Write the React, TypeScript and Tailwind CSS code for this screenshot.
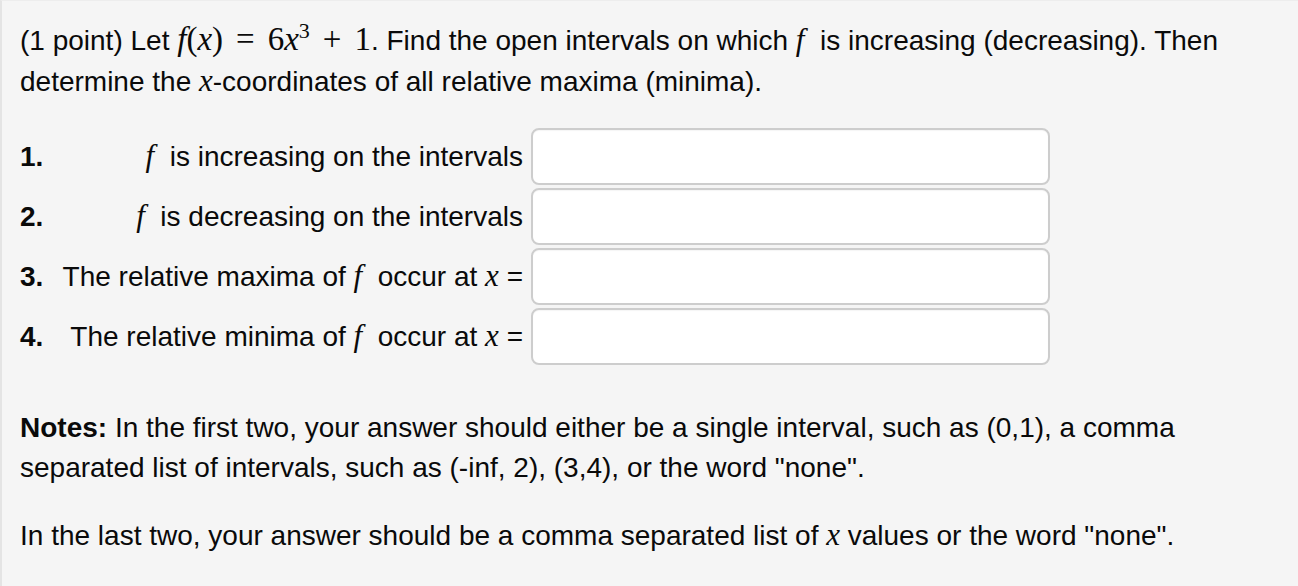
import React from 'react';

const M: React.FC<{ children: React.ReactNode; className?: string }> = ({ children, className = '' }) => (
  <span className={`font-['Liberation_Serif',serif] italic text-[31px] ${className}`}>{children}</span>
);

const rows = [
  { n: '1.', label: (<><M>f</M>&nbsp; is increasing on the intervals</>) },
  { n: '2.', label: (<><M>f</M>&nbsp; is decreasing on the intervals</>) },
  { n: '3.', label: (<>The relative maxima of <M>f</M>&nbsp; occur at <M>x</M> =</>) },
  { n: '4.', label: (<>The relative minima of <M>f</M>&nbsp; occur at <M>x</M> =</>) },
];

export default function App() {
  return (
    <div className="min-h-[586px] w-[1298px] bg-[#f5f5f5] border-l-2 border-t border-l-[#e4e4e4] border-t-[#ededed] pl-[18px] pt-[19px] text-[28px] leading-[40px] text-[#0a0a0a] font-['Liberation_Sans',Arial,sans-serif]">
      {/* problem statement */}
      <p className="whitespace-nowrap">
        (1 point) Let{' '}
        <span className="font-['Liberation_Serif',serif] text-[33px] leading-[0] not-italic">
          <i>f</i>(<i>x</i>)<span className="mx-[13px]">=</span>6<i>x</i>
          <sup className="text-[22px] -top-[0.55em]">3</sup>
          <span className="mx-[13px]">+</span>1
        </span>
        . Find the open intervals on which <M>f</M>&nbsp; is increasing (decreasing). Then
        <br />
        determine the <M>x</M>-coordinates of all relative maxima (minima).
      </p>

      {/* answer rows */}
      <div className="mt-[26px] grid grid-cols-[40px_463px_527px] gap-y-[3px] items-center">
        {rows.map((r) => (
          <React.Fragment key={r.n}>
            <div className="font-bold">{r.n}</div>
            <div className="flex justify-end whitespace-nowrap">
              <span>{r.label}</span>
            </div>
            <div className="ml-[8px] h-[57px] rounded-[8px] border-2 border-[#cdcdcd] bg-white shadow-[inset_0_1px_1px_rgba(0,0,0,0.04)]" />
          </React.Fragment>
        ))}
      </div>

      {/* notes */}
      <p className="mt-[43px] whitespace-nowrap">
        <b>Notes:</b> In the first two, your answer should either be a single interval, such as (0,1), a comma
        <br />
        separated list of intervals, such as (-inf, 2), (3,4), or the word "none".
      </p>
      <p className="mt-[27px] whitespace-nowrap">
        In the last two, your answer should be a comma separated list of <M>x</M> values or the word "none".
      </p>
    </div>
  );
}
